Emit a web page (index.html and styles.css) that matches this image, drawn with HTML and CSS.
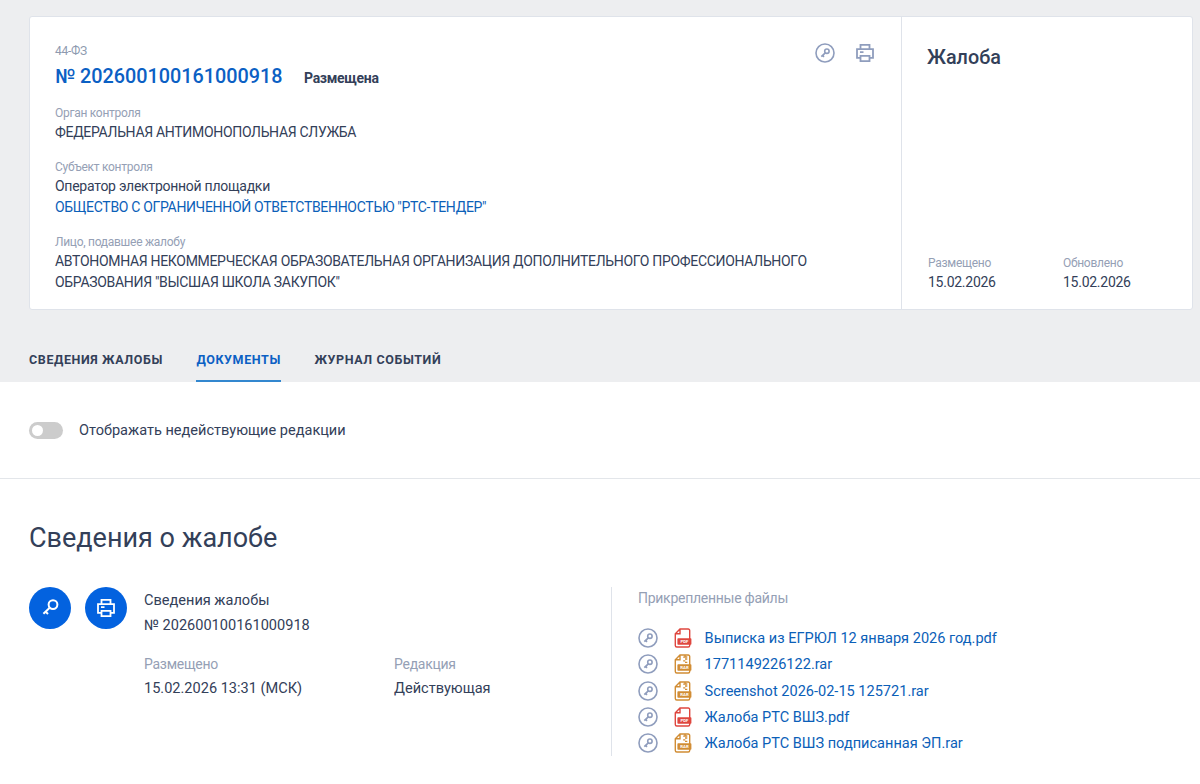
FILE: index.html
```html
<!DOCTYPE html>
<html lang="ru">
<head>
<meta charset="utf-8">
<title>Жалоба № 202600100161000918</title>
<link rel="stylesheet" href="styles.css">
</head>
<body>
<svg class="defs" width="0" height="0" aria-hidden="true">
  <symbol id="key" viewBox="0 0 20 20">
    <circle cx="10" cy="10" r="9" fill="none" stroke="currentColor" stroke-width="1.6"/>
    <circle cx="11.9" cy="8.2" r="2.2" fill="none" stroke="currentColor" stroke-width="1.6"/>
    <path d="M10.3 9.8 6.3 13.6M7.6 12.4l1.4 1.4" fill="none" stroke="currentColor" stroke-width="1.7"/>
  </symbol>
  <symbol id="key-large" viewBox="0 0 20 20">
    <circle cx="13" cy="6.6" r="4.4" fill="none" stroke="currentColor" stroke-width="2"/>
    <path d="M10 9.6 3.4 15.8M5.6 13.6l2.4 2.4" fill="none" stroke="currentColor" stroke-width="2"/>
  </symbol>
  <symbol id="print" viewBox="0 0 20 20">
    <path d="M5.5 6V1.9h9V6M5.3 14.8H2V6.2h16v8.6h-3.3M5.5 12.8h9v5.3h-9zM5 9.2h3.5" fill="none" stroke="currentColor" stroke-width="1.8"/>
  </symbol>
  <symbol id="pdf" viewBox="0 0 18 20">
    <path d="M15.7 11V2.5Q15.7 1 14.2 1H6L1.3 5.8V17.5Q1.3 19 2.8 19H14.2Q15.7 19 15.7 17.5V16M6 1v4.8H1.3" fill="none" stroke="currentColor" stroke-width="1.4"/>
    <rect x="3.4" y="10.3" width="14" height="6.4" rx=".8" fill="currentColor"/>
  </symbol>
  <symbol id="rar" viewBox="0 0 18 20">
    <path d="M15.7 11V2.5Q15.7 1 14.2 1H6L1.3 5.8V17.5Q1.3 19 2.8 19H14.2Q15.7 19 15.7 17.5V16M6 1v4.8H1.3" fill="none" stroke="currentColor" stroke-width="1.4"/>
    <path d="M11 1v2h2.3M11.3 3.2H9.2M11 5h2.3M11.3 6.8H9.2M11 8.4h2.3" fill="none" stroke="currentColor" stroke-width="1.3"/>
    <rect x="3.4" y="10.3" width="14" height="6.4" rx=".8" fill="currentColor"/>
  </symbol>
</svg>
<header class="top">
  <div class="card">
    <div class="card-main">
      <div class="law">44-ФЗ</div>
      <div class="title-row"><a class="number">№ 202600100161000918</a><span class="status">Размещена</span></div>
      <div class="group"><div class="label">Орган контроля</div><div class="value">ФЕДЕРАЛЬНАЯ АНТИМОНОПОЛЬНАЯ СЛУЖБА</div></div>
      <div class="group"><div class="label">Субъект контроля</div><div class="value value-text">Оператор электронной площадки</div><div class="value"><a class="org">ОБЩЕСТВО С ОГРАНИЧЕННОЙ ОТВЕТСТВЕННОСТЬЮ "РТС-ТЕНДЕР"</a></div></div>
      <div class="group"><div class="label">Лицо, подавшее жалобу</div><div class="value">АВТОНОМНАЯ НЕКОММЕРЧЕСКАЯ ОБРАЗОВАТЕЛЬНАЯ ОРГАНИЗАЦИЯ ДОПОЛНИТЕЛЬНОГО ПРОФЕССИОНАЛЬНОГО<br>ОБРАЗОВАНИЯ "ВЫСШАЯ ШКОЛА ЗАКУПОК"</div></div>
      <div class="actions"><svg class="icon"><use href="#key"/></svg><svg class="icon"><use href="#print"/></svg></div>
    </div>
    <aside class="card-side">
      <h2 class="kind">Жалоба</h2>
      <div class="dates">
        <div class="date"><div class="label">Размещено</div><div class="value value-text">15.02.2026</div></div>
        <div class="date"><div class="label">Обновлено</div><div class="value value-text">15.02.2026</div></div>
      </div>
    </aside>
  </div>
  <nav class="tabs">
    <a class="tab">СВЕДЕНИЯ ЖАЛОБЫ</a>
    <a class="tab tab-active">ДОКУМЕНТЫ</a>
    <a class="tab">ЖУРНАЛ СОБЫТИЙ</a>
  </nav>
</header>
<div class="filter"><span class="switch"><span class="knob"></span></span><span class="filter-text">Отображать недействующие редакции</span></div>
<main class="content">
  <h1 class="heading">Сведения о жалобе</h1>
  <div class="columns">
    <section class="doc">
      <div class="buttons">
        <span class="round"><svg class="round-icon"><use href="#key-large"/></svg></span>
        <span class="round"><svg class="round-icon"><use href="#print"/></svg></span>
      </div>
      <div class="doc-info">
        <div class="doc-line">Сведения жалобы</div>
        <div class="doc-line">№ 202600100161000918</div>
        <div class="meta">
          <div><div class="meta-label">Размещено</div><div class="meta-value">15.02.2026 13:31 (МСК)</div></div>
          <div><div class="meta-label">Редакция</div><div class="meta-value">Действующая</div></div>
        </div>
      </div>
    </section>
    <section class="files">
      <div class="files-title">Прикрепленные файлы</div>
      <div class="file"><svg class="sign"><use href="#key"/></svg><svg class="type pdf" viewBox="0 0 18 20"><use href="#pdf"/><text x="10.5" y="15" class="file-type">PDF</text></svg><a class="file-name">Выписка из ЕГРЮЛ 12 января 2026 год.pdf</a></div>
      <div class="file"><svg class="sign"><use href="#key"/></svg><svg class="type rar" viewBox="0 0 18 20"><use href="#rar"/><text x="10.5" y="15" class="file-type">RAR</text></svg><a class="file-name">1771149226122.rar</a></div>
      <div class="file"><svg class="sign"><use href="#key"/></svg><svg class="type rar" viewBox="0 0 18 20"><use href="#rar"/><text x="10.5" y="15" class="file-type">RAR</text></svg><a class="file-name">Screenshot 2026-02-15 125721.rar</a></div>
      <div class="file"><svg class="sign"><use href="#key"/></svg><svg class="type pdf" viewBox="0 0 18 20"><use href="#pdf"/><text x="10.5" y="15" class="file-type">PDF</text></svg><a class="file-name">Жалоба РТС ВШЗ.pdf</a></div>
      <div class="file"><svg class="sign"><use href="#key"/></svg><svg class="type rar" viewBox="0 0 18 20"><use href="#rar"/><text x="10.5" y="15" class="file-type">RAR</text></svg><a class="file-name">Жалоба РТС ВШЗ подписанная ЭП.rar</a></div>
    </section>
  </div>
</main>
</body>
</html>
```
FILE: styles.css
```css
* { box-sizing: border-box; }
body { margin: 0; height: 784px; overflow: hidden; background: #fff; color: #334059; font-family: Roboto, "Liberation Sans", sans-serif; font-size: 14.56px; }
svg { display: block; flex: none; }
.defs { position: absolute; }
.top { height: 382px; padding: 16px 7px 0 29px; background: #edeef0; display: flex; flex-direction: column; }
.card { height: 294px; flex: none; display: flex; background: #fff; border: 1px solid #dfe3ea; border-radius: 3px; }
.card-main { position: relative; flex: none; width: 871px; padding: 26px 0 0 25px; }
.law { font-size: 12px; letter-spacing: -.26px; line-height: 16px; color: #8e9ab0; }
.title-row { display: flex; align-items: baseline; height: 24px; margin-top: 6px; line-height: 24px; }
.number { width: 249px; font-size: 19.8px; font-weight: 500; color: #0b60c4; white-space: nowrap; }
.status { font-size: 14px; letter-spacing: -.3px; font-weight: 700; }
.group { margin-top: 16px; }
.label { font-size: 12px; letter-spacing: -.28px; line-height: 17px; color: #95a0b5; }
.value { font-size: 14px; letter-spacing: -.31px; line-height: 21px; white-space: nowrap; }
.value-text { letter-spacing: -.26px; }
.org { color: #0b60b8; }
.actions { position: absolute; top: 26px; right: 26px; display: flex; gap: 20.5px; color: #8f9dbd; }
.icon { width: 20px; height: 20px; }
.card-side { flex: 1; border-left: 1px solid #dfe3ea; padding: 28px 0 16px 25px; display: flex; flex-direction: column; justify-content: space-between; }
.kind { margin: 0; font-size: 19.8px; line-height: 26px; font-weight: 500; }
.dates { display: flex; padding-left: 1px; }
.date { width: 135px; }
.tabs { display: flex; gap: 33.5px; margin-top: auto; }
.tab { height: 33px; line-height: 22px; font-size: 12.5px; font-weight: 700; letter-spacing: .61px; white-space: nowrap; }
.tab-active { color: #0b60c4; border-bottom: 2px solid #3287cf; }
.filter { height: 97px; padding-left: 29px; border-bottom: 1px solid #e3e6ea; display: flex; align-items: center; gap: 16px; }
.switch { width: 34px; height: 17px; border-radius: 9px; background: #ccc; padding: 3px; }
.knob { display: block; width: 11px; height: 11px; border-radius: 50%; background: #fff; }
.content { padding: 39px 29px 0; }
.heading { margin: 0; font-size: 27px; line-height: 40px; font-weight: 400; }
.columns { display: flex; margin-top: 29px; }
.doc { width: 583px; height: 169px; border-right: 1px solid #dfe3ea; display: flex; gap: 17px; }
.buttons { display: flex; gap: 14px; }
.round { width: 42px; height: 42px; border-radius: 50%; background: #0362df; color: #fff; display: flex; align-items: center; justify-content: center; }
.round-icon { width: 20px; height: 20px; }
.doc-info { padding-top: 1px; }
.doc-line { line-height: 25px; }
.meta { display: grid; grid-template-columns: 250px auto; margin-top: 15px; }
.meta-label { line-height: 23px; font-size: 14px; letter-spacing: -.27px; color: #95a0b5; }
.meta-value { line-height: 24px; }
.files { padding-left: 26px; }
.files-title { line-height: 23px; margin-bottom: 15px; font-size: 14px; letter-spacing: -.27px; color: #95a0b5; }
.file { display: flex; align-items: center; height: 26.3px; }
.sign { width: 20px; height: 20px; color: #8f9dbd; }
.type { width: 18px; height: 20px; margin: 0 12.6px 0 16px; }
.pdf { color: #df473f; }
.rar { color: #d18d35; }
.file-type { font: 700 4.3px Roboto, sans-serif; fill: #fff; text-anchor: middle; }
.file-name { color: #0b60b8; white-space: nowrap; }
```
